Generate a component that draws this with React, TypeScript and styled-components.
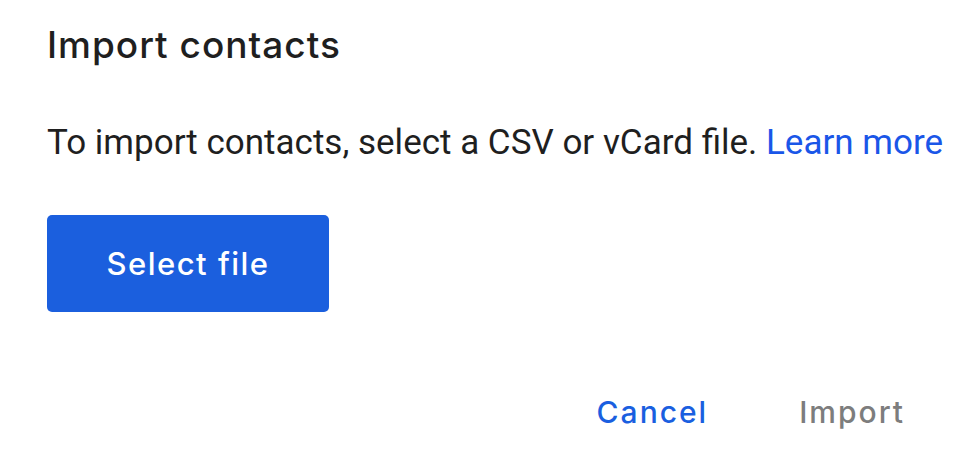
import styled, { createGlobalStyle } from "styled-components";

const GlobalStyle = createGlobalStyle`
    html, body {
        margin: 0;
        padding: 0;
        background: #ffffff;
    }
`;

const Dialog = styled.div`
    width: 975px;
    height: 467px;
    box-sizing: border-box;
    padding: 21px 28px 0 47px;
    display: flex;
    flex-direction: column;
    background: #ffffff;
`;

const Title = styled.h1`
    margin: 0;
    font-family: Inter, "Open Sans", sans-serif;
    font-weight: 500;
    font-size: 37px;
    line-height: 48px;
    letter-spacing: 1px;
    color: #1f1f1f;
`;

const Body = styled.p`
    margin: 53px 0 0;
    font-family: Roboto, "Liberation Sans", sans-serif;
    font-size: 35px;
    line-height: 42px;
    color: #1f1f1f;
    white-space: nowrap;
`;

const Link = styled.a`
    color: #1a56e8;
    text-decoration: none;
`;

const PrimaryButton = styled.button`
    margin-top: 51px;
    width: 282px;
    height: 97px;
    border: none;
    border-radius: 5px;
    background: #1b5fde;
    color: #ffffff;
    font-family: Inter, "Open Sans", sans-serif;
    font-weight: 500;
    font-size: 31px;
    letter-spacing: 1.5px;
    cursor: pointer;
`;

const Actions = styled.div`
    margin-top: 78px;
    display: flex;
    justify-content: flex-end;
    gap: 91px;
    padding-right: 42px;
`;

const TextButton = styled.button<{ $disabled?: boolean }>`
    border: none;
    background: none;
    padding: 0;
    font-family: Inter, "Open Sans", sans-serif;
    font-weight: 500;
    font-size: 30px;
    line-height: 44px;
    letter-spacing: 2px;
    color: ${(p) => (p.$disabled ? "#7d7d7d" : "#1a5fe0")};
    cursor: ${(p) => (p.$disabled ? "default" : "pointer")};
`;

export default function App() {
    return (
        <>
            <GlobalStyle />
            <Dialog>
                <Title>Import contacts</Title>
                <Body>
                    To import contacts, select a CSV or vCard file. <Link href="#">Learn more</Link>
                </Body>
                <div>
                    <PrimaryButton>Select file</PrimaryButton>
                </div>
                <Actions>
                    <TextButton>Cancel</TextButton>
                    <TextButton $disabled>Import</TextButton>
                </Actions>
            </Dialog>
        </>
    );
}
